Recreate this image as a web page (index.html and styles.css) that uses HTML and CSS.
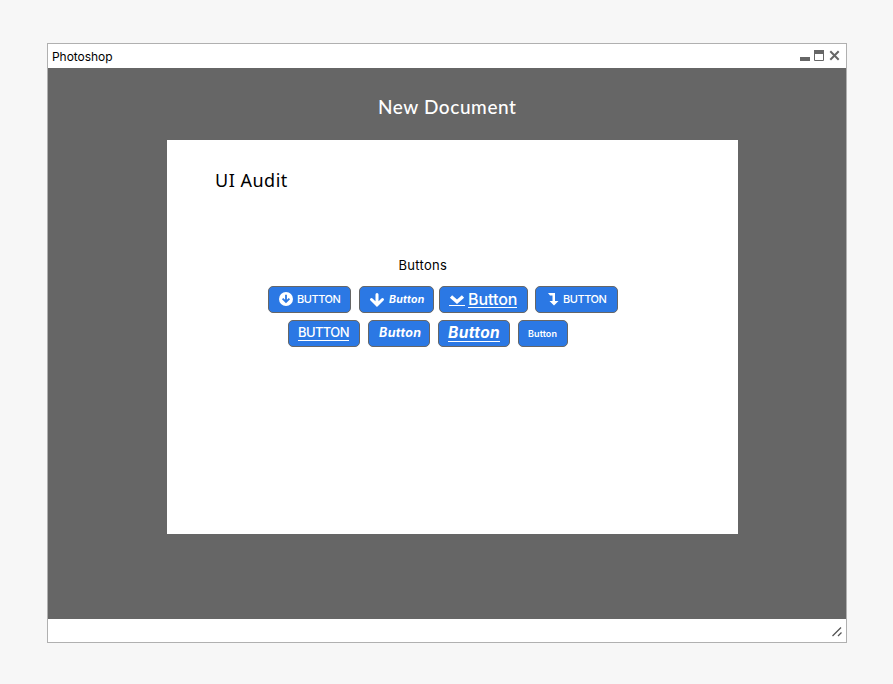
FILE: index.html
```html
<!DOCTYPE html>
<html lang="en">
<head>
<meta charset="utf-8">
<title>Photoshop</title>
<link rel="stylesheet" href="styles.css">
</head>
<body>
<main class="window">
  <header class="titlebar">
    <span class="app-name">Photoshop</span>
    <svg class="controls" width="42" height="14" viewBox="0 0 42 14">
      <path d="M1 8h10v4H1z" fill="#666"/>
      <path d="M15.5 1.5h9v10h-9z" fill="#fff" stroke="#666"/>
      <path d="M15 1h10v4H15z" fill="#666"/>
      <path d="M31.3 2.3l8.4 8.4M39.7 2.3l-8.4 8.4" stroke="#666" stroke-width="2"/>
    </svg>
  </header>
  <section class="workspace">
    <h1 class="doc-title">New Document</h1>
    <article class="page">
      <h2 class="page-title">UI Audit</h2>
      <h3 class="group-title">Buttons</h3>
      <div class="row row-icons">
        <button class="btn b1"><svg width="14" height="14" viewBox="0 0 14 14"><circle cx="7" cy="7" r="7" fill="#fff"/><path d="M7 2.8v7.6M3.6 6.6L7 10l3.4-3.4" fill="none" stroke="#2b78e4" stroke-width="1.8"/></svg><span>BUTTON</span></button>
        <button class="btn b2"><svg width="16" height="14" viewBox="0 0 16 14"><path d="M8 1.5v9M2.5 6.5L8 11.8l5.5-5.3" fill="none" stroke="#fff" stroke-width="3" stroke-linecap="round"/></svg><span>Button</span></button>
        <button class="btn b3"><svg width="16" height="12" viewBox="0 0 16 12"><path d="M2 2.5l6 5.3 6-5.3" fill="none" stroke="#fff" stroke-width="3.4"/><path d="M0 11.5h16" stroke="#fff"/></svg><span>Button</span></button>
        <button class="btn b4"><svg width="11" height="14" viewBox="0 0 11 14"><path d="M0 1h7v8h3.5L6 13.5 1.500 9H4.500V3.500H2z" fill="#fff"/></svg><span>BUTTON</span></button>
      </div>
      <div class="row row-text">
        <button class="btn b5"><span>BUTTON</span></button>
        <button class="btn b6"><span>Button</span></button>
        <button class="btn b7"><span>Button</span></button>
        <button class="btn b8"><span>Button</span></button>
      </div>
    </article>
  </section>
  <footer class="statusbar">
    <svg width="10" height="10" viewBox="0 0 10 10"><path d="M.5 9L9 .5M6 9l3.500-3.500" stroke="#555" stroke-width="1.3"/></svg>
  </footer>
</main>
</body>
</html>
```
FILE: styles.css
```css
* { box-sizing: border-box; }
body { margin: 0; background: #f7f7f7; font-family: Inter, "Liberation Sans", sans-serif; color: #000; }
h1, h2, h3 { margin: 0; font-weight: 400; white-space: nowrap; }
.window { width: 800px; height: 600px; margin: 43px 0 0 47px; border: 1px solid #b0b0b0; background: #fff; display: flex; flex-direction: column; }
.titlebar { height: 24px; padding: 0 5px 0 4px; display: flex; align-items: center; justify-content: space-between; }
.app-name { font-size: 12px; letter-spacing: -.05px; }
.workspace { height: 551px; background: #666; }
.doc-title { padding: 27px 0 0 330px; height: 72px; font: 500 19px/24px Lato, sans-serif; letter-spacing: .58px; color: #fff; }
.page { width: 571px; height: 394px; margin-left: 119px; padding-top: 28px; background: #fff; }
.page-title { padding-left: 48px; font: 400 18px/24px "Noto Sans", sans-serif; letter-spacing: .5px; }
.group-title { margin: 63px 0 0 231.5px; font-size: 13px; line-height: 20px; letter-spacing: .3px; }
.row { display: flex; }
.row-icons { margin: 11px 0 0 101px; }
.row-text { margin: 7px 0 0 121px; }
.btn { height: 27px; padding: 0 0 0 9px; border: 1px solid #666; border-radius: 5px; background: #2b78e4; color: #fff; font: 500 11px/16px Inter, sans-serif; display: flex; align-items: center; white-space: nowrap; }
.btn svg { flex: none; display: block; }
.btn span { flex: none; }
.b1 { width: 83px; margin-right: 8px; padding: 0 0 1px 10px; gap: 4px; letter-spacing: -.45px; }
.b2 { width: 75px; margin-right: 5px; gap: 4px; font-weight: 700; font-style: italic; font-size: 10.5px; letter-spacing: .3px; }
.b3 { width: 89px; margin-right: 7px; gap: 3px; font-size: 16px; letter-spacing: -.05px; }
.b4 { width: 83px; padding: 0 0 1px 12px; gap: 4px; letter-spacing: -.45px; }
.b3 span, .b5 span, .b7 span { border-bottom: 1px solid #fff; }
.b5 { width: 72px; margin-right: 8px; padding-bottom: 2px; font-size: 13px; letter-spacing: -.6px; }
.b6 { width: 62px; margin-right: 8px; padding: 0 0 2px 10px; font-size: 12.5px; font-weight: 700; font-style: italic; letter-spacing: .4px; }
.b7 { width: 72px; margin-right: 8px; padding-bottom: 1px; font-size: 15.5px; font-weight: 700; font-style: italic; letter-spacing: .4px; }
.b8 { width: 50px; font-size: 9px; font-weight: 600; letter-spacing: .1px; }
.statusbar { flex: 1; display: flex; align-items: center; justify-content: flex-end; padding: 3px 4px 0 0; }
```
